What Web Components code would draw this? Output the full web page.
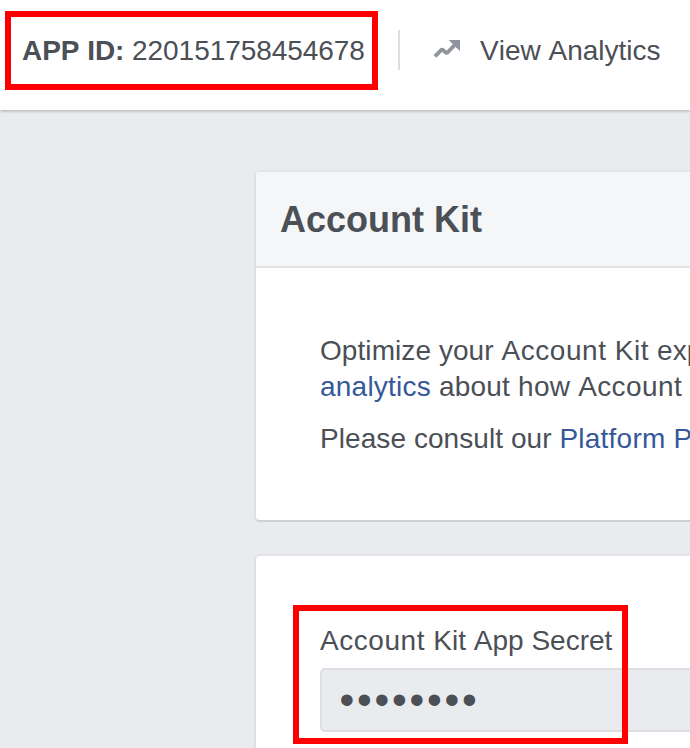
<!DOCTYPE html>
<html lang="en">
<head>
<meta charset="utf-8">
<title>Account Kit</title>
<style>
  html, body { margin: 0; height: 748px; overflow: hidden; background: #e9ebee; }
  body { position: relative; font: 28px/36px "Liberation Sans", Arial, Helvetica, sans-serif; font-kerning: none; color: #4b4f56; }
</style>
</head>
<body>
<account-page></account-page>
<script>
const define = (name, html) => customElements.define(name, class extends HTMLElement {
  constructor() {
    super();
    const t = document.createElement('template');
    t.innerHTML = html;
    this.attachShadow({ mode: 'open' }).appendChild(t.content.cloneNode(true));
  }
});

define('trend-icon', `
<style>:host{display:block;width:28px;height:20px} svg{display:block}</style>
<svg width="28" height="20" viewBox="0 1 28 20">
  <path d="M1.9 17.4 L8.9 10.3 L13.8 14.3 L22 5.6" fill="none" stroke="#90949c" stroke-width="3.8" stroke-linejoin="bevel"/>
  <path d="M15.7 1 H27 V12 L23.7 9 L19.5 4.8 Z" fill="#90949c"/>
</svg>`);

define('top-bar', `
<style>
  :host{display:flex;align-items:center;box-sizing:border-box;height:110px;padding:0 0 10px 22px;background:#fff;
    box-shadow:0 1px 3px rgba(0,0,0,.28);white-space:nowrap}
  .rule{width:2px;height:40px;margin:0 33px 0 34px;background:#dcdee3}
  trend-icon{margin-right:19px}
  .id{width:342px;letter-spacing:-.05px}
  .id,.link{padding-top:2px}
</style>
<div class="id"><slot name="id"></slot></div>
<div class="rule"></div>
<trend-icon></trend-icon>
<div class="link"><slot></slot></div>`);

define('content-card', `
<style>
  :host{display:block;box-sizing:border-box;background:#fff;border:2px solid #dfe0e4;border-right:0;
    border-top-color:#e4e5e9;border-bottom-color:#cecfd4;border-radius:6px 0 0 6px;overflow:hidden;white-space:nowrap}
</style>
<slot name="head"></slot><slot></slot>`);

define('card-title', `
<style>:host{display:flex;align-items:center;box-sizing:border-box;height:96px;padding:2px 0 0 24px;background:#f5f6f7;
  border-bottom:2px solid #e1e3e6;font-size:36px;line-height:44px;font-weight:bold}</style>
<slot></slot>`);

define('text-link', `<style>:host{color:#365899}</style><slot></slot>`);

define('secret-field', `
<style>
  :host{display:block}
  .box{display:flex;align-items:center;box-sizing:border-box;height:64px;margin-top:9px;padding-left:17.5px;
    background:#e9ebee;border:2px solid #dddfe2;border-right:0;border-radius:5px 0 0 5px}
  .dots{font-size:42px;line-height:60px;letter-spacing:2.8px}
</style>
<slot></slot>
<div class="box"><span class="dots">••••••••</span></div>`);

define('mark-frame', `<style>:host{display:block;position:absolute;box-sizing:border-box;border:6px solid #f00}</style>`);

define('account-page', `
<style>
  :host{display:flex;flex-direction:column;height:748px;overflow:hidden}
  top-bar{flex:none}
  main{display:flex;flex-direction:column;flex:1;gap:32px;padding:60px 0 0 254px;min-height:0}
  .intro{height:352px;flex:none}
  .body{padding:65px 0 0 64px}
  p{margin:0 0 16px;letter-spacing:.07px}
  .wide{letter-spacing:.55px}
  .mid{letter-spacing:.22px}
  .secret{flex:1;border-bottom:0;border-bottom-left-radius:0}
  .form{padding:67px 0 0 64px}
  .one{left:5px;top:11px;width:373px;height:79px}
  .two{left:293px;top:605px;width:335px;height:139px}
</style>
<top-bar><span slot="id"><b>APP ID:</b> 220151758454678</span><span>View Analytics</span></top-bar>
<main>
  <content-card class="intro">
    <card-title slot="head">Account Kit</card-title>
    <div class="body">
      <p>Optimize your <span class="wide">Account Kit</span> exp<br><span class="mid"><text-link>analytics</text-link> about how </span><span class="wide" style="letter-spacing:.4px">Account</span></p>
      <p>Please consult our <text-link class="mid">Platform P</text-link></p>
    </div>
  </content-card>
  <content-card class="secret">
    <div class="form"><secret-field><span class="wide">Account </span>Kit App Secret</secret-field></div>
  </content-card>
</main>
<mark-frame class="one"></mark-frame>
<mark-frame class="two"></mark-frame>`);
</script>
</body>
</html>
